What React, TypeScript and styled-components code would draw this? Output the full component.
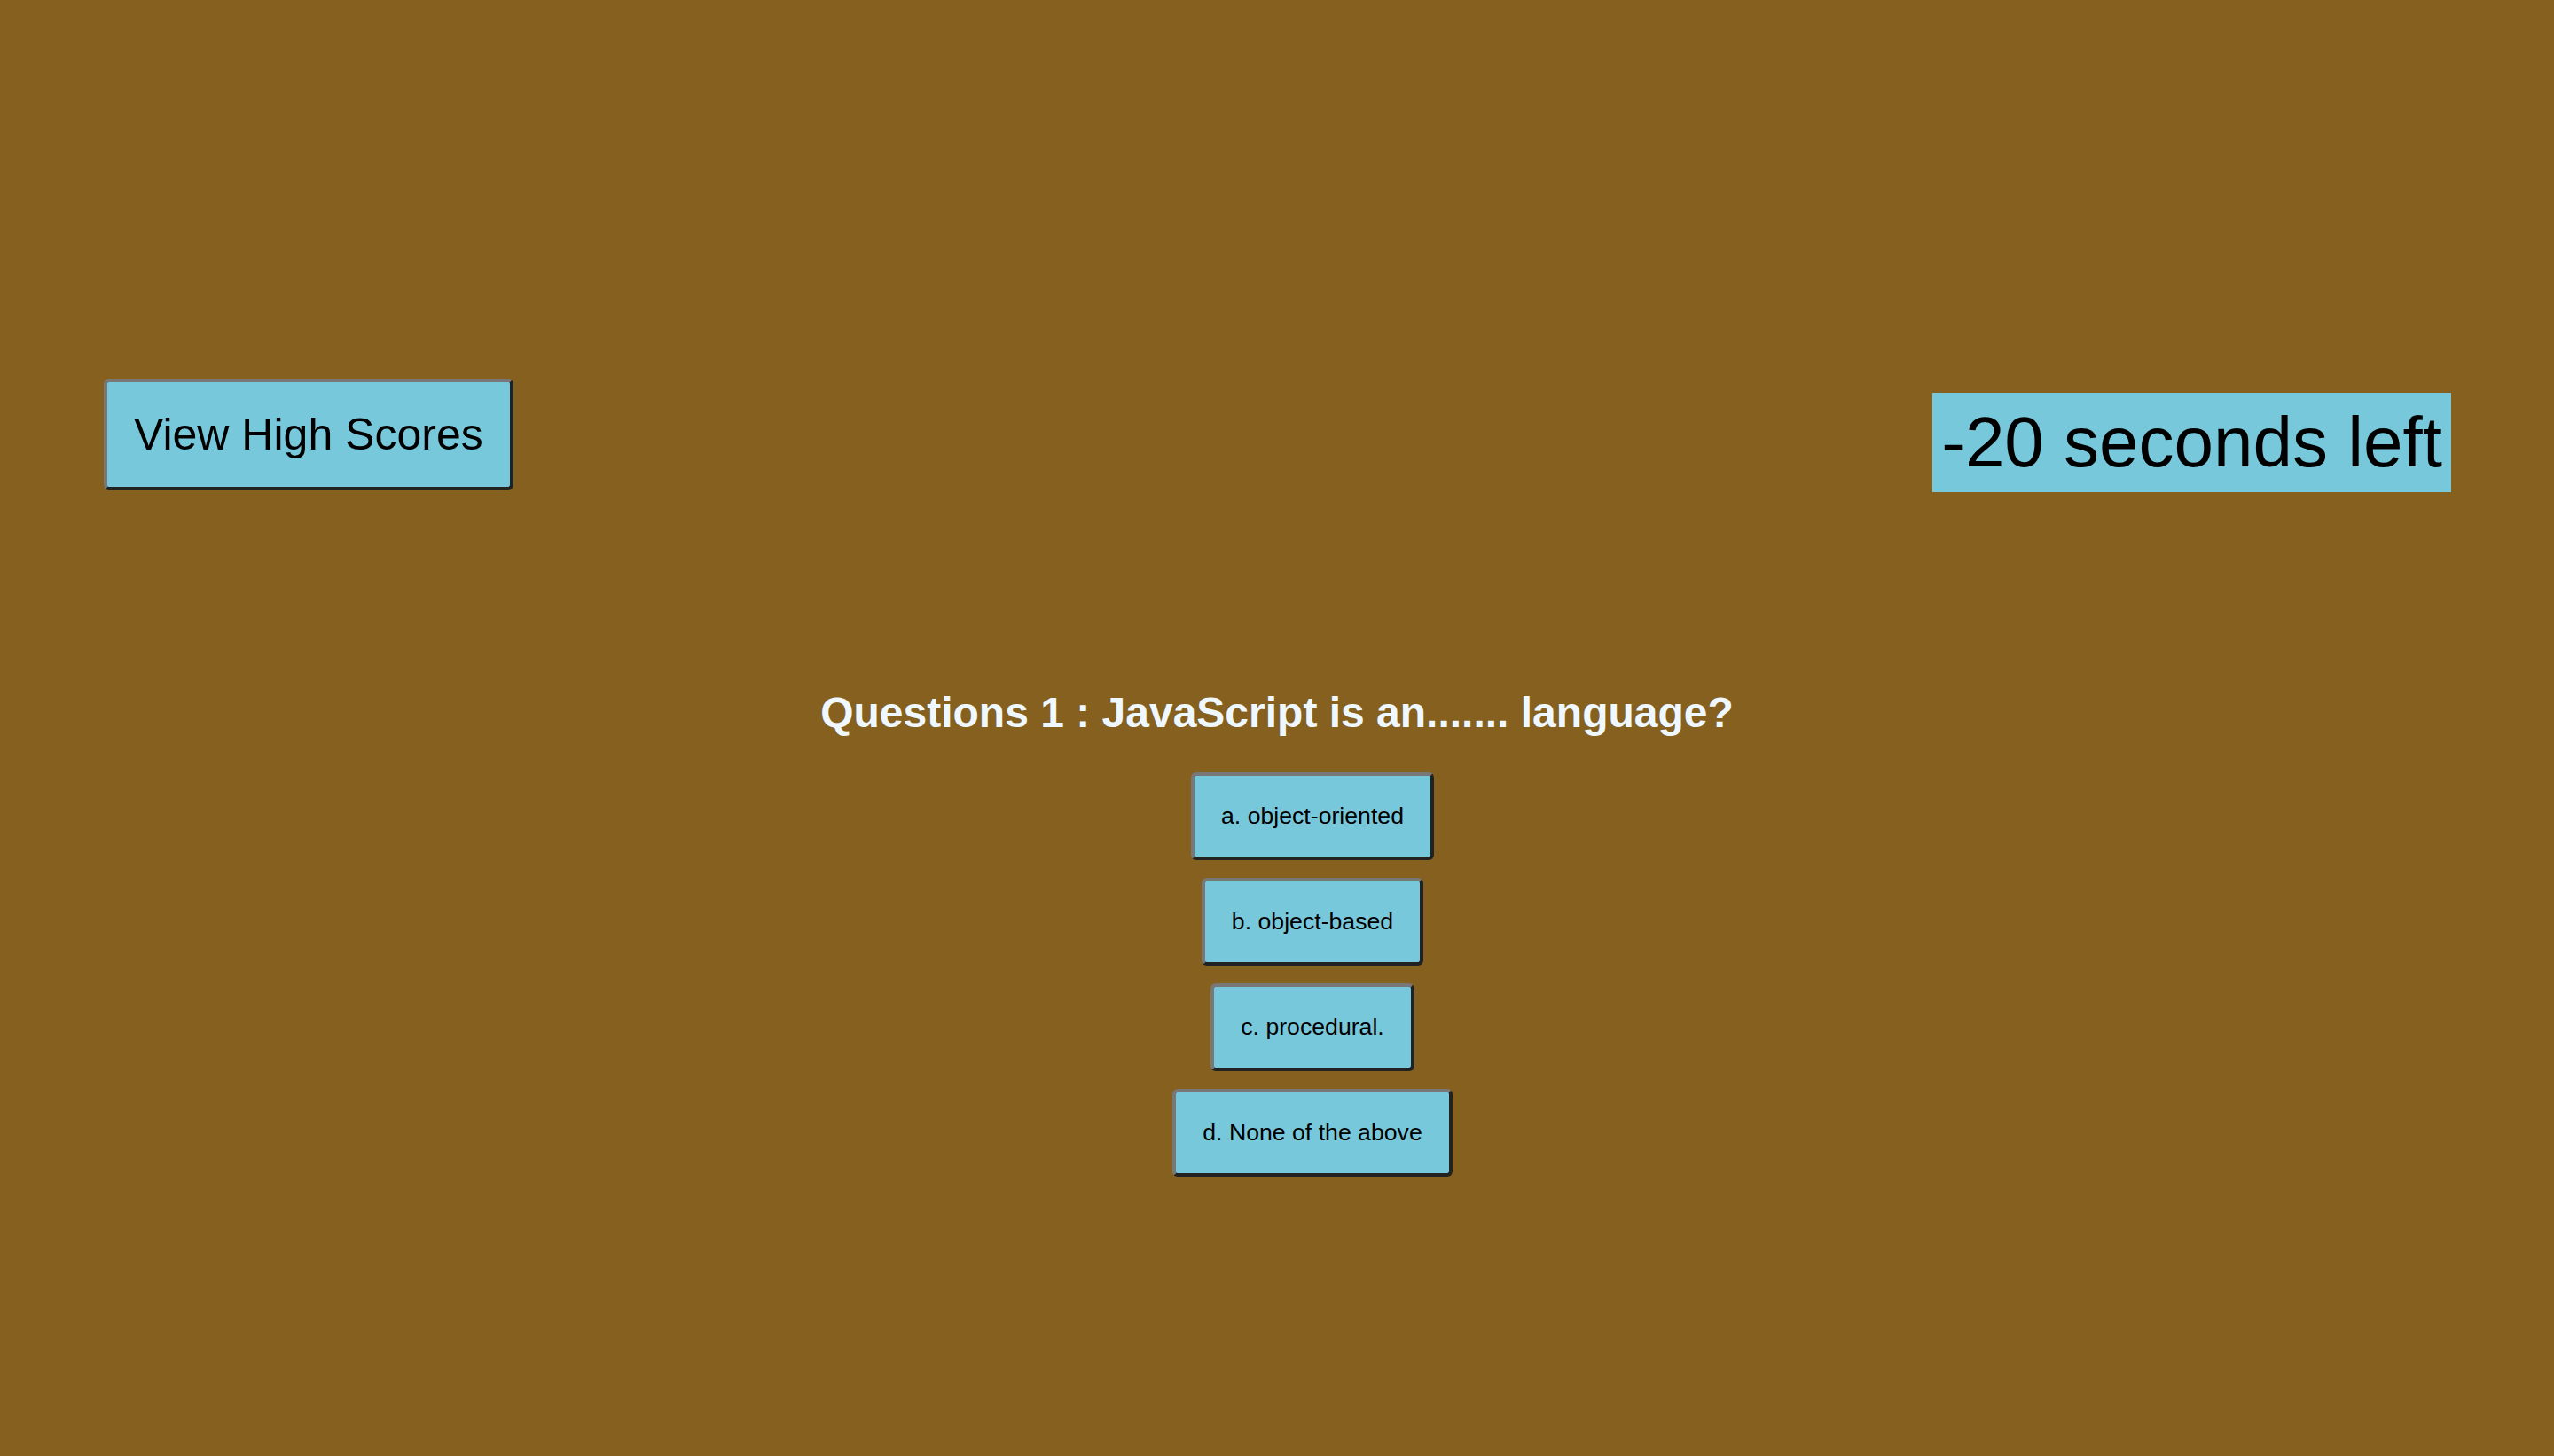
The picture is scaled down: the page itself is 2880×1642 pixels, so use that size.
import React from "react";
import styled, { createGlobalStyle } from "styled-components";

const GlobalStyle = createGlobalStyle`
  html, body {
    margin: 0;
    padding: 0;
    background: #86601f;
    min-height: 100%;
  }
  body {
    font-family: "Liberation Sans", Arial, Helvetica, sans-serif;
    min-height: 1642px;
  }
`;

const Page = styled.div`
  min-height: 1642px;
  background: #86601f;
  display: flex;
  flex-direction: column;
`;

const Header = styled.header`
  display: flex;
  justify-content: space-between;
  align-items: flex-start;
  padding: 427px 116px 0 117px;
`;

const BlueButton = styled.button<{ $size: number; $padY: number; $padX: number }>`
  background: #78c8dc;
  color: #000;
  font-family: "Liberation Sans", Arial, sans-serif;
  font-size: ${(p) => p.$size}px;
  line-height: normal;
  padding: ${(p) => p.$padY}px ${(p) => p.$padX}px;
  border-width: 4px;
  border-style: solid;
  border-color: #787878 #222222 #222222 #787878;
  border-radius: 6px;
  cursor: pointer;
  margin: 0;
`;

const Timer = styled.div`
  margin-top: 16px;
  background: #78c8dc;
  color: #000;
  font-size: 80px;
  line-height: normal;
  padding: 10px 10px;
`;

const Main = styled.main`
  margin-top: 221px;
  display: flex;
  flex-direction: column;
  align-items: center;
`;

const Question = styled.h2`
  margin: 0 0 40px;
  font-size: 48px;
  font-weight: bold;
  color: #f0f8ff;
  text-align: center;
  line-height: normal;
`;

const AnswerList = styled.div`
  display: flex;
  flex-direction: column;
  align-items: center;
  gap: 20px;
  padding-left: 80px;
  align-self: stretch;
`;

const answers = [
  "a. object-oriented",
  "b. object-based",
  "c. procedural.",
  "d. None of the above",
];

export default function App() {
  return (
    <Page>
      <GlobalStyle />
      <Header>
        <BlueButton $size={50} $padY={30} $padX={30}>
          View High Scores
        </BlueButton>
        <Timer>-20 seconds left</Timer>
      </Header>
      <Main>
        <Question>Questions 1 : JavaScript is an....... language?</Question>
        <AnswerList>
          {answers.map((a) => (
            <BlueButton key={a} $size={26.67} $padY={30} $padX={30}>
              {a}
            </BlueButton>
          ))}
        </AnswerList>
      </Main>
    </Page>
  );
}
